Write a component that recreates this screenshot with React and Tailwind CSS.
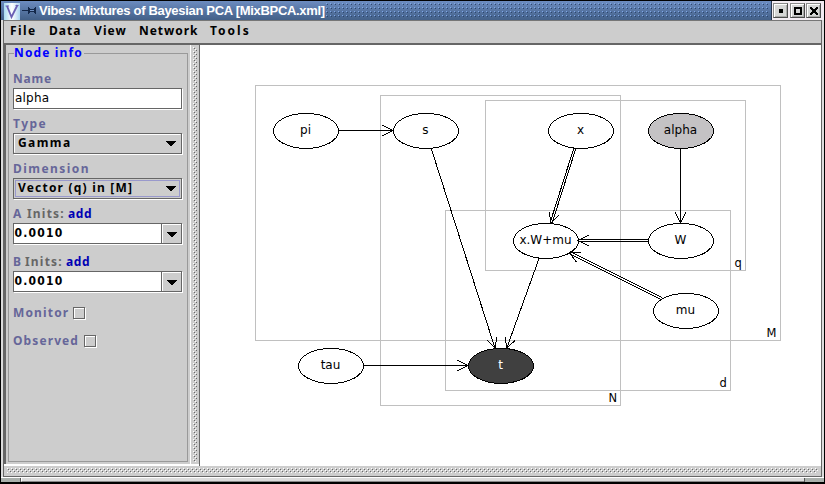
import React from "react";

function Dots({ id, light, dark, dense }) {
  return (
    <svg className="block h-full w-full" shapeRendering="crispEdges">
      <defs>
        <pattern id={id} width="4" height="4" patternUnits="userSpaceOnUse">
          <rect x="0" y="0" width="1" height="1" fill={light} />
          <rect x="1" y="1" width="1" height="1" fill={dark} />
          {dense && <rect x="2" y="2" width="1" height="1" fill={light} />}
          {dense && <rect x="3" y="3" width="1" height="1" fill={dark} />}
        </pattern>
      </defs>
      <rect width="100%" height="100%" fill={`url(#${id})`} />
    </svg>
  );
}

function WindowButton({ children }) {
  return (
    <div className="flex h-[15px] w-[15px] items-center justify-center border border-t-[#8a8a8a] border-l-[#8a8a8a] border-r-[#4c4c4c] border-b-[#4c4c4c] bg-[#d6d6d6] shadow-[inset_1px_1px_0_#fff,inset_-1px_-1px_0_#aaa]">
      <svg width="9" height="9" viewBox="0 0 9 9" shapeRendering="crispEdges">
        {children}
      </svg>
    </div>
  );
}

function TitleBar() {
  return (
    <div className="flex h-[19px] items-center bg-linear-to-b from-[#6c8cc0] to-[#436088] pl-[3px]">
      <svg width="16" height="17" viewBox="0 0 16 17" className="mt-px shrink-0">
        <defs>
          <linearGradient id="logo" x1="0" x2="1">
            <stop offset="0" stopColor="#a9dcf0" />
            <stop offset="0.5" stopColor="#ffffff" />
            <stop offset="1" stopColor="#a9d4f0" />
          </linearGradient>
        </defs>
        <rect width="16" height="17" fill="url(#logo)" />
        <path d="M3 3 L7.5 14 L13.5 2" fill="none" stroke="#6a5fb4" strokeWidth="1.8" />
        <path d="M1.5 3h3.5M11.5 2.5h3" stroke="#6a5fb4" />
      </svg>
      <svg width="14" height="9" viewBox="0 0 14 9" className="ml-[2px] shrink-0" shapeRendering="crispEdges">
        <path d="M0 4h6v1H0zM6 1h1v7H6zM7 2h1v1h4v-1h1v-1h1v7h-1v-1h-1v-1H8v1H7z" fill="#14284a" />
        <path d="M8 4h4v1H8z" fill="#6f90c2" />
      </svg>
      <div className="ml-[3px] whitespace-nowrap font-['Liberation_Sans',sans-serif] text-[13px] leading-[19px] font-bold tracking-[-0.31px] text-white">
        Vibes: Mixtures of Bayesian PCA [MixBPCA.xml]
      </div>
      <div className="ml-[1px] h-[15px] min-w-0 flex-1">
        <Dots id="title-dots" light="#7fa8e8" dark="#2c4770" />
      </div>
      <div className="ml-[1px] flex h-[19px] w-[53px] items-center justify-between border-l border-[#26344c] bg-[#f3ecf3] pr-[3px] pl-[1px]">
        <WindowButton><path d="M3 3h4v4H3z" /></WindowButton>
        <WindowButton><path d="M1 1h8v8H1z M3 3v4h4V3z" fillRule="evenodd" /></WindowButton>
        <WindowButton><path d="M1 1h2v1h1v1h2V2h1V1h2v2H8v1H7v2h1v1h1v2H7V8H6V7H4v1H3v1H1V7h1V6h1V4H2V3H1z" /></WindowButton>
      </div>
    </div>
  );
}

function MenuBar() {
  return (
    <div className="flex h-[23px] border-t border-[#777] bg-[#cdcdcd] pl-[6px] text-[12px] leading-[20px] font-bold text-black">
      <div className="w-[39px] tracking-[1.45px]">File</div>
      <div className="w-[45px] tracking-[1px]">Data</div>
      <div className="w-[45px] tracking-[1.1px]">View</div>
      <div className="w-[71px] tracking-[0.95px]">Network</div>
      <div className="tracking-[2px]">Tools</div>
    </div>
  );
}

function Arrow() {
  return (
    <svg width="10" height="5" viewBox="0 0 10 5" shapeRendering="crispEdges">
      <path d="M0 0h10v1H9v1H8v1H7v1H6v1H4V4H3V3H2V2H1V1H0z" />
    </svg>
  );
}

function Label({ children }) {
  return <div className="h-[15px] leading-4 text-[#666699]">{children}</div>;
}

const frame = "flex h-[21px] w-[169px] border border-[#666] shadow-[1px_1px_0_#fff]";

function InitField({ name }) {
  return (
    <>
      <Label>
        <div className="flex">
          <span className={name === "A" ? "w-[14px]" : "w-[12px]"}>{name}</span>
          <span className="w-[41px] tracking-[1.2px] text-[#666]">Inits:</span>
          <span className="tracking-[0.6px] text-[#0000b4]">add</span>
        </div>
      </Label>
      <div className={`mt-[2px] ${frame}`}>
        <div className="min-w-0 flex-1 bg-white pl-[0.5px] leading-[18px] tracking-[1.2px] text-black">
          <span className="font-['DejaVu_Sans_Condensed','DejaVu_Sans',sans-serif]">0.0010</span>
        </div>
        <div className="flex w-[20px] items-center justify-center border-l border-[#666] bg-[#cdcdcd] pt-[2px] shadow-[inset_1px_1px_0_#fff]">
          <Arrow />
        </div>
      </div>
    </>
  );
}

function Combo({ children, focused }) {
  return (
    <div className={`mt-[2px] mb-[7px] ${frame} bg-[#cdcdcd]`}>
      {focused ? (
        <div className="m-px flex flex-1 items-center justify-between border border-[#9999cc] pr-[3px] pl-[2px] leading-[15px] text-black">
          {children}
          <Arrow />
        </div>
      ) : (
        <div className="flex flex-1 items-center justify-between border border-t-white border-r-transparent border-b-transparent border-l-white pr-[4px] pl-[3px] leading-[17px] text-black">
          {children}
          <Arrow />
        </div>
      )}
    </div>
  );
}

function Check() {
  return <div className="mt-[2px] h-[12px] w-[12px] border border-[#666] shadow-[1px_1px_0_#fff,inset_1px_1px_0_#fff]" />;
}

function Sidebar() {
  return (
    <div className="flex w-[186px] flex-col border-l-2 border-[#666] bg-[#cdcdcd] pt-[1px] pr-[2px] pb-[2px] pl-[2px]">
      <fieldset className="mx-0 flex-1 border border-[#999] px-[4px] text-[12px] font-bold">
        <legend className="ml-[1px] h-[14px] bg-[#cdcdcd] pr-[1px] text-[12px] leading-[13px] tracking-[1.15px] text-[#0000ff]">Node info</legend>
        <div className="h-[11px]" />
        <Label><span className="tracking-[0.75px]">Name</span></Label>
        <div className={`mt-[2px] mb-[7px] ${frame} bg-white pl-[1px] font-['DejaVu_Sans',sans-serif] leading-[19px] font-normal tracking-[0.2px] text-black`}>alpha</div>
        <Label><span className="tracking-[1.5px]">Type</span></Label>
        <Combo><span className="pb-[2px] tracking-[1.4px]">Gamma</span></Combo>
        <Label><span className="tracking-[1.45px]">Dimension</span></Label>
        <Combo focused><span className="pb-[2px] tracking-[1.2px]">Vector (q) in [M]</span></Combo>
        <InitField name="A" />
        <div className="h-[10px]" />
        <InitField name="B" />
        <div className="h-[13px]" />
        <Label><div className="flex"><span className="w-[60px] tracking-[1.15px]">Monitor</span><Check /></div></Label>
        <div className="h-[13px]" />
        <Label><div className="flex"><span className="w-[71px] tracking-[1.1px]">Observed</span><Check /></div></Label>
      </fieldset>
    </div>
  );
}

const nodes = {
  pi: { x: 305, y: 130 },
  s: { x: 425, y: 130 },
  x: { x: 580, y: 130 },
  alpha: { x: 680, y: 130, fill: "#c4c2c4" },
  "x.W+mu": { x: 545, y: 240 },
  W: { x: 680, y: 240 },
  mu: { x: 685, y: 310 },
  tau: { x: 330, y: 365 },
  t: { x: 500, y: 365, fill: "#404040", text: "#ffffff" },
};

const edges = [
  ["pi", "s"],
  ["s", "t"],
  ["x", "x.W+mu", true],
  ["alpha", "W"],
  ["W", "x.W+mu", true],
  ["mu", "x.W+mu", true],
  ["x.W+mu", "t"],
  ["tau", "t"],
];

const plates = [
  { name: "M", x: 255, y: 85, r: 780, b: 340, tx: 766, ty: 337 },
  { name: "N", x: 380, y: 95, r: 620, b: 405, tx: 608, ty: 402 },
  { name: "q", x: 485, y: 100, r: 745, b: 270, tx: 734, ty: 267 },
  { name: "d", x: 445, y: 210, r: 730, b: 390, tx: 719, ty: 387 },
];

function Edge({ from, to, double }) {
  const a = nodes[from];
  const b = nodes[to];
  const dx = b.x - a.x;
  const dy = b.y - a.y;
  const len = Math.hypot(dx, dy);
  const t = 1 / Math.hypot(dx / 32.5, dy / 17.5);
  const x1 = a.x + 0.5 + dx * t;
  const y1 = a.y + 0.5 + dy * t;
  const x2 = b.x + 0.5 - dx * t;
  const y2 = b.y + 0.5 - dy * t;
  const ux = dx / len;
  const uy = dy / len;
  const bx = x2 - ux * 10.5;
  const by = y2 - uy * 10.5;
  const offsets = double ? [-1, 1] : [0];
  return (
    <g stroke="#000" fill="none">
      {offsets.map((o) => (
        <line key={o} x1={x1 - uy * o} y1={y1 + ux * o} x2={x2 - uy * o} y2={y2 + ux * o} />
      ))}
      <polyline points={`${bx - uy * 5.3},${by + ux * 5.3} ${x2},${y2} ${bx + uy * 5.3},${by - ux * 5.3}`} />
    </g>
  );
}

function Diagram() {
  return (
    <svg className="block h-full w-full" viewBox="200 45 621 421" fontFamily="'DejaVu Sans', sans-serif" fontSize="12">
      <g shapeRendering="crispEdges">
        {plates.map((p) => (
          <rect key={p.name} x={p.x + 0.5} y={p.y + 0.5} width={p.r - p.x} height={p.b - p.y} fill="none" stroke="#c0c0c0" />
        ))}
        {Object.entries(nodes).map(([name, n]) => (
          <ellipse key={name} cx={n.x + 1} cy={n.y + 0.9} rx="32.5" ry="17.5" fill={n.fill || "#fff"} stroke="#000" />
        ))}
        {edges.map(([from, to, double]) => (
          <Edge key={from + to} from={from} to={to} double={double} />
        ))}
      </g>
      {plates.map((p) => (
        <text key={p.name} x={p.tx + 0.5} y={p.ty} fontSize="11.5">{p.name}</text>
      ))}
      {Object.entries(nodes).map(([name, n]) => (
        <text key={name} x={n.x + 0.5} y={n.y + 4} textAnchor="middle" fill={n.text || "#000"}>{name}</text>
      ))}
    </svg>
  );
}

export default function App() {
  return (
    <div className="h-[484px] w-[825px] overflow-hidden border-t border-r border-b-2 border-l border-black bg-[#dcdcdc] font-['Noto_Sans','Open_Sans',sans-serif]">
      <div className="flex h-full flex-col">
        <TitleBar />
        <div className="flex h-[457px] flex-col border-r-2 border-l-2 border-r-[#dcdcdc] border-l-[#dcdcdc]">
          <div className="flex flex-1 flex-col border-r border-b border-l border-[#666]">
            <MenuBar />
            <div className="h-[2px] bg-[#666]" />
            <div className="flex h-[421px] shrink-0">
              <div className="flex flex-1">
                <div className="flex flex-1 border-b-2 border-white">
                  <Sidebar />
                  <div className="flex w-[9px] flex-col border-l border-white bg-[#cdcdcd] px-[2px] py-[2px]">
                    <Dots id="split-v" light="#ffffff" dark="#666666" dense />
                  </div>
                </div>
                <div className="w-px bg-[#666]" />
              </div>
              <div className="w-[621px] shrink-0 bg-white">
                <Diagram />
              </div>
            </div>
            <div className="h-[10px] bg-[#cdcdcd] px-[3px] pt-[2px] pb-[3px]">
              <div className="h-[5px]">
                <Dots id="split-h" light="#ffffff" dark="#666666" dense />
              </div>
            </div>
          </div>
        </div>
        <div className="flex h-[5px] justify-between border-t border-t-white bg-[#dcdcdc]">
          <div className="w-[20px] border-r border-[#555] bg-[#aab0ac]" />
          <div className="flex-1 border-b border-l border-b-[#888] border-l-white" />
          <div className="w-[20px] border-l border-[#555] bg-[#aab0ac]" />
        </div>
      </div>
    </div>
  );
}
